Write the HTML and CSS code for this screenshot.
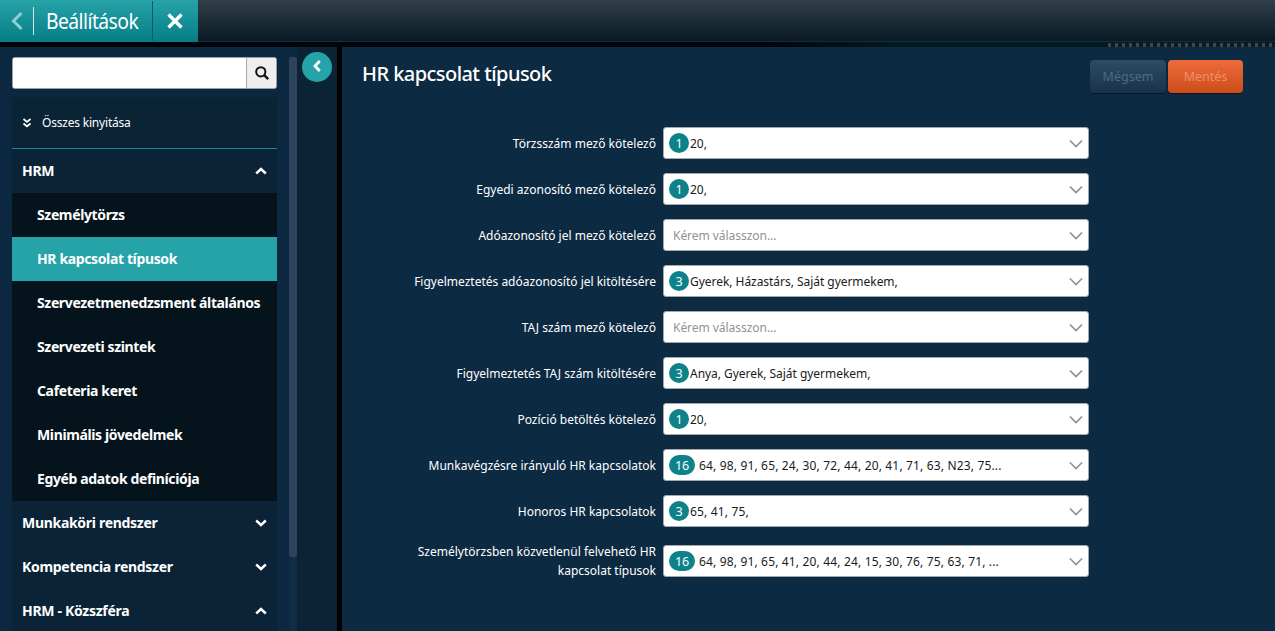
FILE: index.html
```
<!DOCTYPE html>
<html lang="hu">
<head>
<meta charset="utf-8">
<title>HR kapcsolat típusok</title>
<link rel="stylesheet" href="styles.css">
</head>
<body>
<header class="topbar">
  <div class="tab">
    <button class="tab-back" aria-label="Vissza"><svg width="14" height="20" viewBox="0 0 14 20"><path d="M11.5 2 3.5 10l8 8" fill="none" stroke="#8fcfcf" stroke-width="3"/></svg></button>
    <span class="tab-title">Beállítások</span>
    <button class="tab-close" aria-label="Bezárás"><svg width="18" height="18" viewBox="0 0 18 18"><path d="M2.5 2.5l13 13M15.500 2.500l-13 13" fill="none" stroke="#fff" stroke-width="3.400"/></svg></button>
  </div>
</header>
<div class="gap"></div>
<main class="main">
  <aside class="sidebar">
    <div class="side-inner">
      <div class="search"><input class="search-input" type="text" aria-label="Keresés"><span class="search-btn"><svg width="16" height="16" viewBox="0 0 16 16"><circle cx="6.800" cy="6.800" r="4.600" fill="none" stroke="#111" stroke-width="2"/><path d="M10.200 10.200l4 4" stroke="#111" stroke-width="2.400"/></svg></span></div>
      <div class="expand-all"><svg width="10" height="10" viewBox="0 0 10 10"><path d="M1.500 1 5 4l3.500-3M1.500 5.500 5 8.500l3.500-3" fill="none" stroke="#fff" stroke-width="1.700"/></svg><span>Összes kinyitása</span></div>
      <div class="group"><span>HRM</span><svg class="chev" width="12" height="8" viewBox="0 0 12 8"><path d="M1.200 6.500 6 2l4.800 4.500" fill="none" stroke="#fff" stroke-width="2.400"/></svg></div>
      <ul class="items">
        <li>Személytörzs</li>
        <li class="active">HR kapcsolat típusok</li>
        <li>Szervezetmenedzsment általános</li>
        <li>Szervezeti szintek</li>
        <li>Cafeteria keret</li>
        <li>Minimális jövedelmek</li>
        <li>Egyéb adatok definíciója</li>
      </ul>
      <div class="group"><span>Munkaköri rendszer</span><svg class="chev" width="12" height="8" viewBox="0 0 12 8"><path d="M1.200 1.500 6 6l4.800-4.500" fill="none" stroke="#fff" stroke-width="2.400"/></svg></div>
      <div class="group"><span>Kompetencia rendszer</span><svg class="chev" width="12" height="8" viewBox="0 0 12 8"><path d="M1.200 1.500 6 6l4.800-4.500" fill="none" stroke="#fff" stroke-width="2.400"/></svg></div>
      <div class="group"><span>HRM - Közszféra</span><svg class="chev" width="12" height="8" viewBox="0 0 12 8"><path d="M1.200 6.500 6 2l4.800 4.500" fill="none" stroke="#fff" stroke-width="2.400"/></svg></div>
    </div>
    <div class="scroll"><div class="thumb"></div></div>
  </aside>
  <div class="rail">
    <button class="collapse" aria-label="Összecsukás"><svg width="10" height="14" viewBox="0 0 10 14"><path d="M7.800 2 3 7l4.800 5" fill="none" stroke="#fff" stroke-width="2.800"/></svg></button>
  </div>
  <section class="content">
    <div class="content-head">
      <h1>HR kapcsolat típusok</h1>
      <div class="actions">
        <button class="btn btn-cancel">Mégsem</button>
        <button class="btn btn-save">Mentés</button>
      </div>
    </div>
    <form class="form">
      <div class="row"><label>Törzsszám mező kötelező</label><div class="select"><span class="badge">1</span><span class="val">20,</span><svg class="arrow" width="14" height="9" viewBox="0 0 14 9"><path d="M1 1.500l6 6 6-6" fill="none" stroke="#8a8f96" stroke-width="1.600"/></svg></div></div>
      <div class="row"><label>Egyedi azonosító mező kötelező</label><div class="select"><span class="badge">1</span><span class="val">20,</span><svg class="arrow" width="14" height="9" viewBox="0 0 14 9"><path d="M1 1.500l6 6 6-6" fill="none" stroke="#8a8f96" stroke-width="1.600"/></svg></div></div>
      <div class="row"><label>Adóazonosító jel mező kötelező</label><div class="select"><span class="ph">Kérem válasszon...</span><svg class="arrow" width="14" height="9" viewBox="0 0 14 9"><path d="M1 1.500l6 6 6-6" fill="none" stroke="#8a8f96" stroke-width="1.600"/></svg></div></div>
      <div class="row"><label>Figyelmeztetés adóazonosító jel kitöltésére</label><div class="select"><span class="badge">3</span><span class="val">Gyerek, Házastárs, Saját gyermekem,</span><svg class="arrow" width="14" height="9" viewBox="0 0 14 9"><path d="M1 1.500l6 6 6-6" fill="none" stroke="#8a8f96" stroke-width="1.600"/></svg></div></div>
      <div class="row"><label>TAJ szám mező kötelező</label><div class="select"><span class="ph">Kérem válasszon...</span><svg class="arrow" width="14" height="9" viewBox="0 0 14 9"><path d="M1 1.500l6 6 6-6" fill="none" stroke="#8a8f96" stroke-width="1.600"/></svg></div></div>
      <div class="row"><label>Figyelmeztetés TAJ szám kitöltésére</label><div class="select"><span class="badge">3</span><span class="val">Anya, Gyerek, Saját gyermekem,</span><svg class="arrow" width="14" height="9" viewBox="0 0 14 9"><path d="M1 1.500l6 6 6-6" fill="none" stroke="#8a8f96" stroke-width="1.600"/></svg></div></div>
      <div class="row"><label>Pozíció betöltés kötelező</label><div class="select"><span class="badge">1</span><span class="val">20,</span><svg class="arrow" width="14" height="9" viewBox="0 0 14 9"><path d="M1 1.500l6 6 6-6" fill="none" stroke="#8a8f96" stroke-width="1.600"/></svg></div></div>
      <div class="row"><label>Munkavégzésre irányuló HR kapcsolatok</label><div class="select"><span class="badge wide">16</span><span class="val num">64, 98, 91, 65, 24, 30, 72, 44, 20, 41, 71, 63, N23, 75...</span><svg class="arrow" width="14" height="9" viewBox="0 0 14 9"><path d="M1 1.500l6 6 6-6" fill="none" stroke="#8a8f96" stroke-width="1.600"/></svg></div></div>
      <div class="row"><label>Honoros HR kapcsolatok</label><div class="select"><span class="badge">3</span><span class="val num">65, 41, 75,</span><svg class="arrow" width="14" height="9" viewBox="0 0 14 9"><path d="M1 1.500l6 6 6-6" fill="none" stroke="#8a8f96" stroke-width="1.600"/></svg></div></div>
      <div class="row row-tall"><label>Személytörzsben közvetlenül felvehető HR kapcsolat típusok</label><div class="select"><span class="badge wide">16</span><span class="val num">64, 98, 91, 65, 41, 20, 44, 24, 15, 30, 76, 75, 63, 71, ...</span><svg class="arrow" width="14" height="9" viewBox="0 0 14 9"><path d="M1 1.500l6 6 6-6" fill="none" stroke="#8a8f96" stroke-width="1.600"/></svg></div></div>
    </form>
  </section>
</main>
</body>
</html>
```
FILE: styles.css
```
* { box-sizing: border-box; }
html, body { margin: 0; height: 100%; overflow: hidden; background: #000; }
body { font-family: "Noto Sans", "Open Sans", sans-serif; color: #fff; font-size: 12px; display: flex; flex-direction: column; height: 631px; }
button { font-family: inherit; border: 0; padding: 0; background: none; }

.topbar { height: 42px; flex: none; background: linear-gradient(#303f4a, #0a1a24); border-bottom: 1px solid #12303c; }
.tab { width: 198px; height: 42px; display: flex; align-items: center; background: linear-gradient(#26a3a8, #067d85); }
.tab-back { width: 34px; height: 28px; display: flex; align-items: center; justify-content: center; border-right: 1px solid #cfe9ea; }
.tab-title { width: 118px; padding-left: 13px; font-size: 21px; line-height: 40px; letter-spacing: -0.6px; transform: scaleX(.92); transform-origin: left; white-space: nowrap; }
.tab-close { width: 46px; height: 40px; padding-right: 2px; display: flex; align-items: center; justify-content: center; border-left: 1px solid #0a5f66; }

.gap { height: 5px; flex: none; background: linear-gradient(90deg, #010509 60%, #04181f 70%); position: relative; }
.gap::after { content: ""; position: absolute; left: 1108px; right: 0; top: 1px; height: 4px; background: repeating-linear-gradient(90deg, #3a474c 0 3px, #0a1c22 3px 7px); }
.main { flex: 1; min-height: 0; display: flex; }

.sidebar { width: 297px; flex: none; display: flex; background: #0c2840; overflow: hidden; }
.side-inner { width: 265px; margin: 10px 12px 0; flex: none; }
.search { height: 32px; display: flex; border: 1px solid #9aa0a5; border-radius: 3px; background: #fff; overflow: hidden; }
.search-input { flex: 1; min-width: 0; border: 0; outline: 0; background: #fff; }
.search-btn { width: 30px; display: flex; align-items: center; justify-content: center; background: #eee; border-left: 1px solid #aaa; }
.expand-all { margin-top: 8px; height: 52px; display: flex; align-items: center; gap: 10px; padding-left: 10px; background: #0a2335; border-bottom: 1px solid #0f8f96; font-size: 12px; letter-spacing: -0.2px; }
.group { height: 44px; display: flex; align-items: center; justify-content: space-between; padding: 0 10px; background: #0a2337; font-size: 14px; font-weight: 700; letter-spacing: -0.3px; }
.group span { margin-top: -2px; }
.group .chev { flex: none; }
.items { list-style: none; margin: 0; padding: 0; background: #05131c; }
.items li { height: 44px; line-height: 43px; padding-left: 25px; font-size: 14px; font-weight: 700; letter-spacing: -0.37px; white-space: nowrap; }
.items li.active { background: #26a2a9; }

.scroll { width: 8px; margin: 10px 0 0 0; flex: none; background: #0f2d46; }
.thumb { height: 500px; background: #2f445a; border-radius: 3px; }

.rail { width: 40px; flex: none; background: #0a2436; padding: 5px 0 0 5px; }
.collapse { width: 30px; height: 30px; border-radius: 50%; background: #26a2a9; display: flex; align-items: center; justify-content: center; padding-bottom: 3px; }

.content { flex: 1; margin-left: 5px; background: #0d2a43; padding: 0 32px 0 20px; min-width: 0; }
.content-head { height: 80px; display: flex; justify-content: space-between; align-items: flex-start; padding-top: 13px; }
h1 { margin: 0; font-size: 20px; font-weight: 500; line-height: 28px; letter-spacing: -0.55px; }
.actions { display: flex; gap: 2px; }
.btn { width: 76px; height: 33px; border-radius: 4px; font-size: 12.500px; box-shadow: 0 1px 1px rgba(0,0,0,.5); }
.btn-cancel { background: linear-gradient(#2f4c66, #17334b); color: #4d6a82; }
.btn-save { width: 75px; background: linear-gradient(#ee6c3c, #cc4c1a); color: #ee9068; }

.form { display: flex; flex-direction: column; gap: 14px; }
.row { display: flex; gap: 7px; align-items: center; height: 32px; }
.row-tall { margin-top: 4px; }
.row label { width: 294px; flex: none; text-align: right; font-size: 12px; line-height: 19px; letter-spacing: 0; }
.select { width: 426px; height: 32px; flex: none; display: flex; align-items: center; background: #fff; border: 1px solid #a5a8ac; border-radius: 3px; padding-left: 5px; position: relative; color: #1a1a1a; font-size: 12px; letter-spacing: -0.04px; }
.badge { width: 20px; height: 20px; border-radius: 10px; background: #0e8289; color: #fff; display: flex; align-items: center; justify-content: center; font-size: 12.500px; flex: none; margin-right: 1px; }
.badge.wide { width: 26px; margin-right: 4px; }
.val { white-space: nowrap; }
.val.num { letter-spacing: 0.16px; }
.ph { color: #8f9399; padding-left: 4px; }
.arrow { position: absolute; right: 5px; top: 11px; }
```
